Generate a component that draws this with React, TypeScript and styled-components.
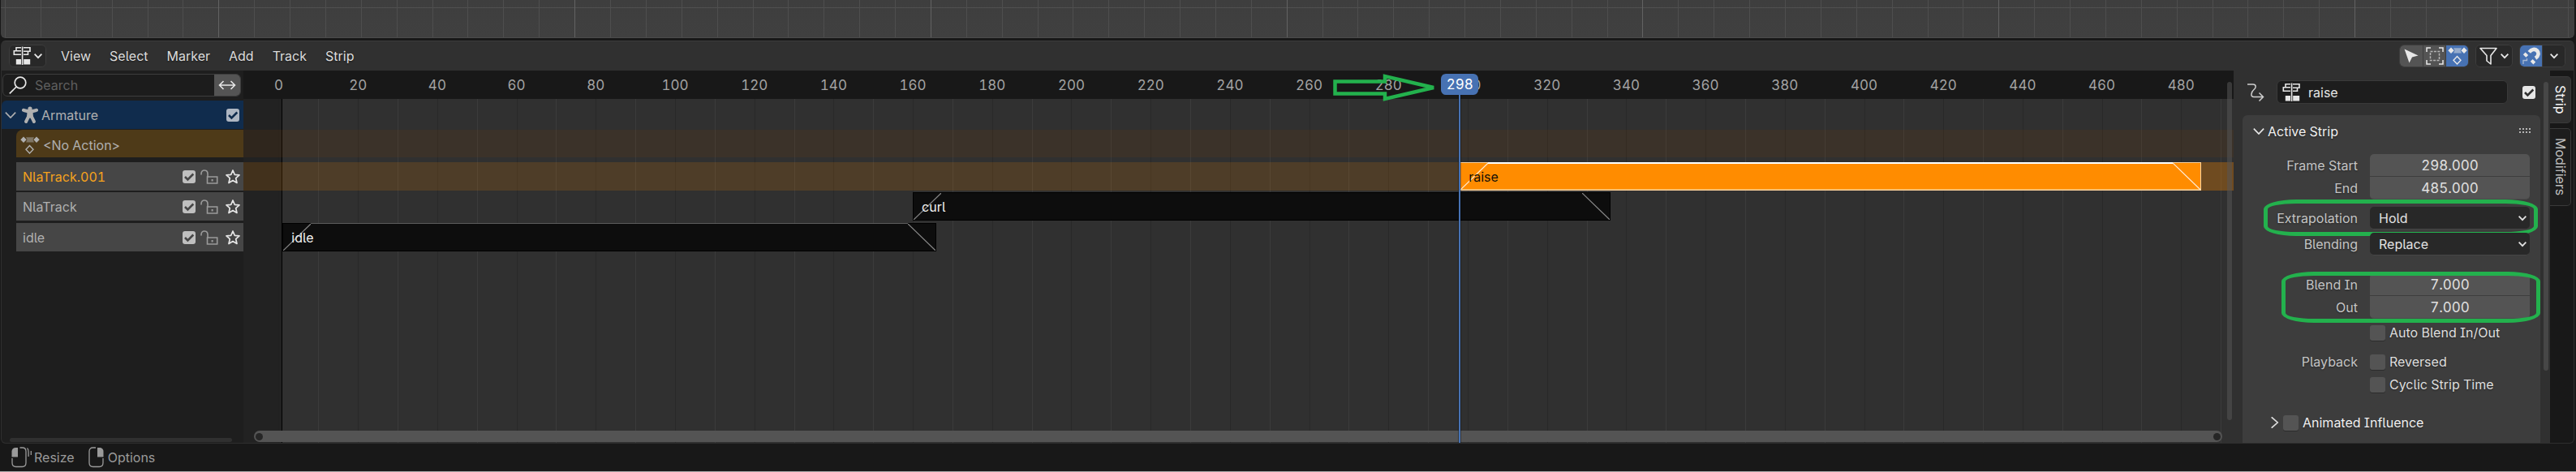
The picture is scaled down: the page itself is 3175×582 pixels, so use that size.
import React from "react";
import styled, { createGlobalStyle } from "styled-components";

const GlobalStyle = createGlobalStyle`
  * { box-sizing: border-box; }
  body {
    margin: 0;
    background: #181818;
    color: #d6d6d6;
    font-family: Inter, "Liberation Sans", sans-serif;
    font-size: 16px;
    line-height: 20px;
    font-feature-settings: "tnum", "cv05", "cv08";
  }
  button, input, select { font: inherit; color: inherit; font-feature-settings: inherit; margin: 0; }
  svg { display: block; fill: none; stroke: currentColor; flex: none; }
`;

/* Frames visible in the timeline, from its left edge to its right edge. */
const VIEW_START = -8.9;
const VIEW_END = 493.24;
const VIEW_SPAN = VIEW_END - VIEW_START;
const at = (frame: number) => `${((frame - VIEW_START) / VIEW_SPAN) * 100}%`;
const span = (frames: number) => `${(frames / VIEW_SPAN) * 100}%`;

const Page = styled.div`
  display: flex;
  flex-direction: column;
  min-height: 100vh;
`;

const Viewport = styled.div`
  position: relative;
  height: 47px;
  margin: 0 2px 3px 1px;
  border-bottom: 1px solid #4b4b4b;
  border-radius: 0 0 6px 6px;
  background: linear-gradient(#3e3e3e, #404040);
  overflow: hidden;
`;
const ViewportHorizon = styled.div`
  position: absolute;
  inset: 9px 0 auto;
  height: 1px;
  background: #505050;
`;
const ViewportLine = styled.div<{ $major: boolean }>`
  position: absolute;
  top: 0;
  bottom: 0;
  width: 1px;
  background: ${(p) => (p.$major ? "#626262" : "#4e4e4e")};
`;

const Editor = styled.main`
  flex: 1;
  display: flex;
  flex-direction: column;
  margin: 0 2px 0 1px;
  border: 1px solid #2f2f2f;
  border-top-color: #3c3c3c;
  border-radius: 6px;
  background: #303030;
  overflow: hidden;
`;

const Header = styled.header`
  display: flex;
  align-items: center;
  height: 36px;
  padding: 0 10px 0 9px;
`;
const Menus = styled.nav`
  display: flex;
  gap: 23px;
  margin: 0 auto 0 18px;
`;
const MenuButton = styled.button`
  padding: 0;
  border: 0;
  background: none;
  color: #dcdcdc;
  text-shadow: 0 1px 2px #0008;
`;
const ButtonGroup = styled.div`
  display: flex;
  height: 28px;
  border: 1px solid #3d3d3d;
  border-radius: 6px;
  background: #262626;
  overflow: hidden;
  & + & { margin-left: 8px; }
`;
const ToolButton = styled.button<{ $tone?: "on" | "raised"; $width: number }>`
  display: flex;
  align-items: center;
  justify-content: center;
  gap: 4px;
  width: ${(p) => p.$width}px;
  padding: 0;
  border: 0;
  color: #e8e8e8;
  background: ${(p) => (p.$tone === "on" ? "#4772b3" : p.$tone === "raised" ? "#545454" : "#282828")};
  & + & { border-left: 1px solid #3d3d3d; }
`;

const Body = styled.div`
  flex: 1;
  display: flex;
  min-height: 0;
`;

const Channels = styled.aside`
  display: flex;
  flex-direction: column;
  flex: none;
  width: 298px;
  background: #1e1e1e;
`;
const SearchBar = styled.div`
  display: flex;
  height: 28px;
  margin: 4px 3px 5px 1px;
  border: 1px solid #3d3d3d;
  border-radius: 6px;
  background: #1c1c1c;
  overflow: hidden;
  align-items: center;
  padding-left: 7px;
  color: #e6e6e6;
`;
const SearchInput = styled.input`
  flex: 1;
  min-width: 0;
  padding: 0 0 0 10px;
  border: 0;
  outline: 0;
  background: none;
  &::placeholder { color: #5f5f5f; opacity: 1; }
`;
const SearchToggle = styled.button`
  display: flex;
  align-items: center;
  justify-content: center;
  align-self: stretch;
  width: 32px;
  padding: 0;
  border: 0;
  background: #545454;
  color: #e6e6e6;
`;

const ChannelRow = styled.div`
  display: flex;
  align-items: center;
  height: 35px;
  color: #b0b0b0;
`;
const ObjectRow = styled(ChannelRow)`
  gap: 6px;
  margin-bottom: 1px;
  padding: 0 5px 0 4px;
  border-radius: 6px 0 0 0;
  background: #102c4d;
`;
const ActionRow = styled(ChannelRow)`
  gap: 4px;
  height: 34px;
  margin: 0 0 6px 18px;
  padding: 3px 5px 0;
  border-radius: 8px 0 0 0;
  background: #4e3a18;
`;
const TrackRow = styled(ChannelRow)<{ $active: boolean; $gap: number }>`
  margin: 0 0 ${(p) => p.$gap}px 18px;
  padding: 0 3px 0 8px;
  background: #464646;
  color: ${(p) => (p.$active ? "#f5a21d" : "#b0b0b0")};
`;
const ChannelName = styled.span`
  display: flex;
  align-items: center;
  gap: 3px;
  flex: 1;
`;
const RowIcon = styled.button<{ $bright?: boolean }>`
  padding: 0;
  border: 0;
  background: none;
  margin-left: ${(p) => (p.$bright ? 8 : 6)}px;
  color: ${(p) => (p.$bright ? "#e6e6e6" : "#9b9b9b")};
`;
const ChannelScroll = styled.div`
  height: 5px;
  margin: auto 14px 1px 10px;
  border-radius: 3px;
  background: #303030;
`;

const CheckWrap = styled.span<{ $size: number }>`
  display: inline-grid;
  width: ${(p) => p.$size}px;
  height: ${(p) => p.$size}px;
  flex: none;
  & > * { grid-area: 1 / 1; }
  & > svg { pointer-events: none; }
`;
const CheckInput = styled.input<{ $fill: string }>`
  appearance: none;
  width: 100%;
  height: 100%;
  border-radius: 3px;
  background: #545454;
  box-shadow: 0 1px 0 #0004;
  &:checked { background: ${(p) => p.$fill}; box-shadow: none; }
`;

const Timeline = styled.section`
  position: relative;
  flex: 1;
  min-width: 0;
  display: flex;
  flex-direction: column;
  overflow: hidden;
`;
const Ruler = styled.div`
  position: relative;
  height: 35px;
  background: #181818;
  color: #a3a3a3;
`;
const RulerMark = styled.span`
  position: absolute;
  top: 8px;
  font-size: 17px;
  transform: translateX(-50%);
`;
const Lanes = styled.div`
  position: relative;
  flex: 1;
  padding-top: 38px;
`;
const GridLine = styled.div<{ $even: boolean }>`
  position: absolute;
  top: 0;
  bottom: 0;
  width: 1px;
  background: ${(p) => (p.$even ? "#292929" : "#3b3b3b")};
`;
const BeforeRange = styled.div`
  position: absolute;
  inset: 0 auto 0 0;
  border-right: 1px solid #000;
  background: #212121f4;
`;
const Lane = styled.div<{ $height: number; $gap: number; $tint?: string }>`
  position: relative;
  height: ${(p) => p.$height}px;
  margin-bottom: ${(p) => p.$gap}px;
  background: ${(p) => p.$tint ?? "none"};
`;
const HoldTail = styled.div`
  position: absolute;
  inset: 0 0 0 auto;
  background: #ff8c0030;
`;
const StripBox = styled.div<{ $selected?: boolean }>`
  position: absolute;
  top: 0;
  bottom: 0;
  display: flex;
  align-items: center;
  padding-left: 10px;
  border: 1px solid ${(p) => (p.$selected ? "#ffd29c" : "#000")};
  background: ${(p) => (p.$selected ? "#ff8c00" : "#0d0d0d")};
  color: ${(p) => (p.$selected ? "#141008" : "#f2f2f2")};
  box-shadow: ${(p) => (p.$selected ? "inset 0 -1px 0 #ffb75e" : "none")};
`;
const StripName = styled.span`
  z-index: 1;
`;
const StripEdge = styled.div<{ $selected?: boolean }>`
  position: absolute;
  top: -1px;
  height: ${(p) => (p.$selected ? 2 : 1)}px;
  background: ${(p) => (p.$selected ? "#fff" : "#5c5c5c")};
`;
const Blend = styled.svg<{ $selected?: boolean; $out?: boolean }>`
  position: absolute;
  top: 0;
  ${(p) => (p.$out ? "right: 0;" : "left: 0;")}
  height: 100%;
  color: ${(p) => (p.$selected ? "#ffeeda" : "#8a8a8a")};
`;
const Playhead = styled.div`
  position: absolute;
  top: 30px;
  bottom: 0;
  width: 2px;
  margin-left: -1px;
  background: #4772b3;
  box-shadow: 0 0 0 1px #0005;
`;
const PlayheadFrame = styled.div`
  position: absolute;
  top: 4px;
  width: 46px;
  height: 26px;
  padding-top: 3px;
  border-radius: 6px;
  background: #4772b3;
  color: #fff;
  font-size: 17px;
  text-align: center;
  transform: translateX(-50%);
`;
const ArrowNote = styled.svg`
  position: absolute;
  top: 4px;
  color: #23b14d;
`;
const TimelineScrollY = styled.div`
  position: absolute;
  top: 14px;
  right: 2px;
  bottom: 28px;
  width: 6px;
  border-radius: 3px;
  background: #5555558c;
`;
const TimelineScrollX = styled.div`
  position: absolute;
  left: 13px;
  right: 14px;
  bottom: 1px;
  display: flex;
  align-items: center;
  justify-content: space-between;
  height: 14px;
  padding: 0 2px;
  border-radius: 7px;
  background: #545454;
`;
const ScrollGrip = styled.span`
  width: 9px;
  height: 9px;
  border-radius: 5px;
  background: #262626;
`;

const Sidebar = styled.aside`
  display: flex;
  flex: none;
  width: 390px;
  padding: 12px 2px 0 11px;
`;
const SidebarMain = styled.div`
  flex: 1;
  display: flex;
  flex-direction: column;
  min-width: 0;
`;
const SidebarScroll = styled.div`
  flex: none;
  width: 6px;
  height: 356px;
  margin: 2px 0 0 4px;
  border-radius: 3px;
  background: #474747;
`;
const StripNameRow = styled.div`
  display: flex;
  align-items: center;
  margin-bottom: 14px;
  padding: 0 6px 0 5px;
  color: #cfcfcf;
`;
const NameField = styled.label`
  display: flex;
  align-items: center;
  flex: 1;
  min-width: 0;
  height: 29px;
  margin: 0 18px 0 15px;
  padding-left: 6px;
  border: 1px solid #3a3a3a;
  border-radius: 6px;
  background: #1d1d1d;
  color: #e6e6e6;
`;
const NameInput = styled.input`
  flex: 1;
  min-width: 0;
  padding: 0 0 0 10px;
  border: 0;
  outline: 0;
  background: none;
`;
const Panel = styled.section`
  flex: 1;
  border-radius: 6px 6px 0 0;
  background: #3d3d3d;
`;
const PanelHeader = styled.header`
  display: flex;
  align-items: center;
  height: 39px;
  padding: 0 11px 0 13px;
  color: #e8e8e8;
`;
const PanelTitle = styled.h2`
  flex: 1;
  margin: 0 0 0 4px;
  font-size: 16px;
  font-weight: 400;
  line-height: 20px;
  color: #f0f0f0;
  text-shadow: 0 1px 2px #0008;
`;
const PanelBody = styled.div`
  padding: 9px 13px 0 0;
`;
const FieldGroup = styled.div<{ $gap: number }>`
  position: relative;
  margin-bottom: ${(p) => p.$gap}px;
`;
const FieldRow = styled.div`
  display: grid;
  grid-template-columns: minmax(0, 142fr) minmax(0, 197fr);
  column-gap: 15px;
  align-items: center;
  height: 28px;
`;
const FieldLabel = styled.label`
  text-align: right;
  color: #c4c4c4;
  text-shadow: 0 1px 2px #0006;
`;
const NumberField = styled.input<{ $edge: "top" | "bottom" }>`
  width: 100%;
  height: 28px;
  padding: 0;
  border: 0;
  border-bottom: 1px solid ${(p) => (p.$edge === "top" ? "#3d3d3d" : "#4a4a4a")};
  border-radius: ${(p) => (p.$edge === "top" ? "5px 5px 0 0" : "0 0 5px 5px")};
  background: #545454;
  color: #e0e0e0;
  font-size: 17px;
  text-align: center;
`;
const SelectWrap = styled.div`
  display: grid;
  align-items: center;
  color: #e2e2e2;
  & > * { grid-area: 1 / 1; }
  & > svg { justify-self: end; margin-right: 4px; pointer-events: none; }
`;
const SelectField = styled.select`
  appearance: none;
  width: 100%;
  height: 28px;
  padding: 0 20px 0 11px;
  border: 0;
  border-bottom: 1px solid #464646;
  border-radius: 5px;
  background: #282828;
`;
const CheckLabel = styled.label<{ $title?: boolean }>`
  display: flex;
  align-items: center;
  gap: 5px;
  white-space: nowrap;
  color: ${(p) => (p.$title ? "#f0f0f0" : "#dedede")};
  text-shadow: 0 1px 2px #0006;
`;
const SubPanel = styled.div`
  display: flex;
  align-items: center;
  gap: 2px;
  height: 28px;
  padding-left: 34px;
  color: #e0e0e0;
`;
const MarkerRing = styled.div<{ $wide?: boolean }>`
  position: absolute;
  inset: ${(p) => (p.$wide ? "-9px -10px auto 26px" : "-2px -13px -5px 48px")};
  ${(p) => (p.$wide ? "height: 45px;" : "")}
  border: 5px solid #23b14d;
  border-radius: 40px / 12px;
  pointer-events: none;
`;

const Tabs = styled.div`
  flex: none;
  width: 29px;
  padding: 7px 3px 0 0;
  background: #181818;
`;
const Tab = styled.button<{ $active?: boolean }>`
  display: flex;
  align-items: center;
  justify-content: center;
  width: 26px;
  height: ${(p) => (p.$active ? 58 : 96)}px;
  margin-bottom: 6px;
  padding: 0;
  border: 1px solid #3a3a3a;
  border-left: 0;
  border-radius: 0 5px 5px 0;
  background: ${(p) => (p.$active ? "#303030" : "#1d1d1d")};
  color: ${(p) => (p.$active ? "#f4f4f4" : "#bdbdbd")};
  writing-mode: vertical-rl;
`;

const StatusBar = styled.footer`
  display: flex;
  align-items: center;
  height: 35px;
  padding: 0 14px 1px;
  border-bottom: 1px solid #a6a6a6;
  color: #9a9a9a;
`;
const Hint = styled.span<{ $gap: number }>`
  display: flex;
  align-items: center;
  gap: ${(p) => p.$gap}px;
  margin-right: 17px;
`;

const Chevron = ({ size = 10, dir = "down" }: { size?: number; dir?: "down" | "right" }) => (
  <svg width={size} height={size} viewBox="0 0 10 10" strokeWidth={size > 12 ? 1.6 : 1.8}>
    <path d={dir === "down" ? "M.6 2.6 5 7.2 9.4 2.6" : "M1.2 .2 6.600 5 1.200 9.800"} vectorEffect="non-scaling-stroke" />
  </svg>
);

const NlaIcon = () => (
  <svg width="22" height="24" viewBox="0 0 22 24" strokeWidth="1.6">
    <path d="M10 1.800H4v4.500M10 5.800H1.300v4.400H10M13 1.800h8v4.400h-8M13 10.200h5.500V6.200" />
    <path d="M11.600 .5v22.500" />
    <path d="M3.800 16h6.200v6.500H3.800zM13.200 16h8v6.500h-8z" fill="currentColor" stroke="none" />
  </svg>
);

const ActionIcon = () => (
  <svg width="24" height="22" viewBox="0 0 24 22" strokeWidth="1.4">
    <path d="M7 1.200h10l-1.500 3 1.500 3.300H7l1.500-3.300z" fill="currentColor" stroke="none" opacity=".5" />
    <path d="M4 .500 7.700 4.300 4 8 .3 4.300zM20 .500l3.700 3.800L20 8l-3.700-3.700z" fill="currentColor" stroke="none" />
    <path d="M11.500 11.500 16 16.300l-4.500 4.700L7 16.300z" />
  </svg>
);

const ArmatureIcon = () => (
  <svg width="22" height="22" viewBox="0 0 22 22" strokeLinecap="round" strokeLinejoin="round">
    <circle cx="11" cy="3" r="2.600" fill="currentColor" stroke="none" />
    <path d="M3 4.800c3 .8 5 1.500 8 1.500s5-.7 8-1.500" strokeWidth="4.200" />
    <path d="M9 7h4l.5 6h-5z" fill="currentColor" strokeWidth="3" />
    <path d="M9 13 6 19M13 13l3 6" strokeWidth="4" />
  </svg>
);

const SearchIcon = () => (
  <svg width="22" height="22" viewBox="0 0 22 22" strokeWidth="1.700">
    <circle cx="14" cy="8" r="6.800" />
    <path d="M9.200 13 .800 21.300" />
  </svg>
);

const LockIcon = () => (
  <svg width="22" height="18" viewBox="0 0 22 18" strokeWidth="1.600">
    <path d="M1 6.500V5.500C1 2.500 2.800 1 5 1s4 1.500 4 4.500V9" />
    <path d="M8.500 9h12.200v8H8.500z" />
    <path d="M14.600 12v2.500" strokeWidth="2" />
  </svg>
);

const StarIcon = () => (
  <svg width="20" height="20" viewBox="0 0 20 20" strokeWidth="1.700" strokeLinejoin="round">
    <path d="m10 2 2.300 5.300 5.700.5-4.300 3.900 1.300 5.800L10 14.500l-5 3 1.300-5.800L2 7.800l5.700-.5z" />
  </svg>
);

const SnapIcon = () => (
  <svg width="22" height="22" viewBox="0 0 22 22" stroke="#fff">
    <path d="M8.300 6.300C11.500 2.200 15.500 2 18 4.500s2 6.700-2 9.300" strokeWidth="4.600" />
    <path d="m2.200 7.800 3.600 3.600M11.200 16.400l3.600 3.600" strokeWidth="4" />
    <path d="M1 21v-4.500h4.500V14" strokeWidth="1.300" opacity=".6" />
  </svg>
);

const MouseIcon = ({ side }: { side: "left" | "right" }) => (
  <svg width={side === "left" ? 26 : 19} height="26" viewBox={side === "left" ? "0 0 26 26" : "0 0 19 26"} strokeWidth="1.300">
    <path d="M1 14v5.500c0 3 1.800 5 4.500 5h8c2.700 0 4.500-2 4.500-5V14" />
    {side === "left" ? (
      <>
        <path d="M8 1H5.500C2.500 1 .500 3 .500 5.500V12.500H8z" fill="currentColor" stroke="none" />
        <path d="M10.500 1h3C16.200 1 18 2.800 18 5.500V14M19.500 1.500c1.300 1 1.600 3 1.600 5V12M24.300 5v5" />
      </>
    ) : (
      <>
        <path d="M11 1h2.500c3 0 5 2 5 4.500v7H11z" fill="currentColor" stroke="none" />
        <path d="M9 1H5.500C2.800 1 1 2.800 1 5.500V14" />
      </>
    )}
  </svg>
);

const Check = ({ size, label, checked, fill = "#bfbfbf", tick = "#464646" }: {
  size: number; label?: string; checked?: boolean; fill?: string; tick?: string;
}) => (
  <CheckWrap $size={size}>
    <CheckInput type="checkbox" defaultChecked={checked} aria-label={label} $fill={fill} />
    {checked && (
      <svg width={size} height={size} viewBox="0 0 16 16" strokeWidth="2.600" stroke={tick}>
        <path d="m3 8 3.400 3.400L13.300 4.500" stroke={tick} />
      </svg>
    )}
  </CheckWrap>
);

const BlendLine = ({ frames, total, out, selected }: { frames: number; total: number; out?: boolean; selected?: boolean }) => (
  <Blend
    $out={out}
    $selected={selected}
    viewBox="0 0 34 34"
    preserveAspectRatio="none"
    strokeWidth="1.200"
    style={{ width: `${(frames / total) * 100}%` }}
  >
    <path d={out ? "M0 0 34 34" : "M0 34 34 0"} vectorEffect="non-scaling-stroke" />
  </Blend>
);

const Strip = ({ name, start, end, edge, selected }: {
  name: string; start: number; end: number; edge?: boolean; selected?: boolean;
}) => {
  const total = end - start;
  const inset = `${(7 / total) * 100}%`;
  return (
    <StripBox $selected={selected} style={{ left: at(start), width: span(total) }}>
      {edge && <StripEdge $selected={selected} style={{ left: inset, right: inset }} />}
      <StripName>{name}</StripName>
      <BlendLine frames={7} total={total} selected={selected} />
      <BlendLine frames={7} total={total} selected={selected} out />
    </StripBox>
  );
};

const rulerFrames = Array.from({ length: 25 }, (_, i) => i * 20);
const gridFrames = Array.from({ length: 50 }, (_, i) => i * 10);
const tracks = [
  { name: "NlaTrack.001", gap: 2 },
  { name: "NlaTrack", gap: 3 },
  { name: "idle", gap: 0 },
];

export default function App() {
  return (
    <Page>
      <GlobalStyle />
      <Viewport>
        <ViewportHorizon />
        {Array.from({ length: 73 }, (_, i) => (
          <ViewportLine key={i} $major={i % 10 === 6} style={{ left: `${0.16 + i * 1.3833}%` }} />
        ))}
      </Viewport>

      <Editor>
        <Header>
          <ButtonGroup>
            <ToolButton $width={44} aria-label="Editor type">
              <NlaIcon />
              <Chevron />
            </ToolButton>
          </ButtonGroup>
          <Menus>
            {["View", "Select", "Marker", "Add", "Track", "Strip"].map((m) => (
              <MenuButton key={m}>{m}</MenuButton>
            ))}
          </Menus>
          <ButtonGroup>
            <ToolButton $width={28} $tone="raised" aria-label="Only selected">
              <svg width="18" height="20" viewBox="0 0 18 20">
                <path d="M.5 1.500 17.500 9.500 10 11.500 6.500 18.500z" fill="currentColor" stroke="none" />
              </svg>
            </ToolButton>
            <ToolButton $width={28} $tone="raised" aria-label="Show hidden">
              <svg width="22" height="22" viewBox="0 0 22 22" strokeWidth="1.500">
                <path d="M1 6V1h5M16 1h5v5M21 16v5h-5M6 21H1v-5" />
                <path d="M5.500 5.500h11v11h-11z" strokeDasharray="3 1.400" opacity=".65" />
              </svg>
            </ToolButton>
            <ToolButton $width={28} $tone="on" aria-label="Include missing NLA">
              <ActionIcon />
            </ToolButton>
          </ButtonGroup>
          <ButtonGroup>
            <ToolButton $width={44} aria-label="Filters">
              <svg width="22" height="22" viewBox="0 0 22 22" strokeWidth="1.600" strokeLinejoin="round">
                <path d="M1 1.500h20l-7 9V21l-5-4v-6.500z" />
              </svg>
              <Chevron />
            </ToolButton>
          </ButtonGroup>
          <ButtonGroup>
            <ToolButton $width={27} $tone="on" aria-label="Snap">
              <SnapIcon />
            </ToolButton>
            <ToolButton $width={28} aria-label="Snap options">
              <Chevron />
            </ToolButton>
          </ButtonGroup>
        </Header>

        <Body>
          <Channels>
            <SearchBar>
              <SearchIcon />
              <SearchInput type="text" placeholder="Search" aria-label="Search channels" />
              <SearchToggle aria-label="Invert search">
                <svg width="22" height="12" viewBox="0 0 22 12" strokeWidth="1.600">
                  <path d="M1.500 6h19M6.500 1l-5 5 5 5M15.500 1l5 5-5 5" />
                </svg>
              </SearchToggle>
            </SearchBar>
            <ObjectRow>
              <Chevron size={14} />
              <ChannelName>
                <ArmatureIcon />
                Armature
              </ChannelName>
              <Check size={16} label="Armature enabled" checked fill="#aeb6c2" tick="#102c4d" />
            </ObjectRow>
            <ActionRow>
              <ActionIcon />
              <ChannelName>&lt;No Action&gt;</ChannelName>
            </ActionRow>
            {tracks.map((t, i) => (
              <TrackRow key={t.name} $active={i === 0} $gap={t.gap}>
                <ChannelName>{t.name}</ChannelName>
                <Check size={16} label={`${t.name} enabled`} checked />
                <RowIcon aria-label={`Lock ${t.name}`}><LockIcon /></RowIcon>
                <RowIcon $bright aria-label={`Solo ${t.name}`}><StarIcon /></RowIcon>
              </TrackRow>
            ))}
            <ChannelScroll />
          </Channels>

          <Timeline>
            <Ruler>
              {rulerFrames.map((f) => (
                <RulerMark key={f} style={{ left: at(f) }}>{f}</RulerMark>
              ))}
            </Ruler>
            <Lanes>
              {gridFrames.map((f) => (
                <GridLine key={f} $even={f % 20 === 0} style={{ left: at(f) }} />
              ))}
              <BeforeRange style={{ width: at(1) }} />
              <Lane $height={34} $gap={6} $tint="#8c460021" />
              <Lane $height={35} $gap={2} $tint="#ff8c0026">
                <HoldTail style={{ left: at(485) }} />
                <Strip name="raise" start={298} end={485} edge selected />
              </Lane>
              <Lane $height={35} $gap={3}>
                <Strip name="curl" start={160} end={336} />
              </Lane>
              <Lane $height={35} $gap={0}>
                <Strip name="idle" start={1} end={166} edge />
              </Lane>
            </Lanes>
            <TimelineScrollX>
              <ScrollGrip />
              <ScrollGrip />
            </TimelineScrollX>
            <TimelineScrollY />
            <Playhead style={{ left: at(298) }} />
            <PlayheadFrame style={{ left: at(298) }}>298</PlayheadFrame>
            <ArrowNote width="129" height="34" viewBox="0 0 129 34" strokeWidth="4.500" style={{ left: at(266) }}>
              <path d="M2.500 9.500H64V3l60 14-60 14V24.500H2.500z" />
            </ArrowNote>
          </Timeline>

          <Sidebar>
            <SidebarMain>
              <StripNameRow>
                <svg width="22" height="22" viewBox="0 0 22 22" strokeWidth="1.500">
                  <path d="M1 1h7c4 0 4 4 1 6.500S4 16.500 9 16.500h11M15.500 11.500l5 5-5 5" />
                </svg>
                <NameField>
                  <NlaIcon />
                  <NameInput type="text" defaultValue="raise" aria-label="Strip name" />
                </NameField>
                <Check size={16} label="Strip enabled" checked fill="#e6e6e6" tick="#303030" />
              </StripNameRow>
              <Panel>
                <PanelHeader>
                  <Chevron size={14} />
                  <PanelTitle>Active Strip</PanelTitle>
                  <svg width="15" height="7" viewBox="0 0 15 7" strokeWidth="2" strokeDasharray="2 2" opacity=".7">
                    <path d="M0 1h15M0 5h15" />
                  </svg>
                </PanelHeader>
                <PanelBody>
                  <FieldGroup $gap={9}>
                    <FieldRow>
                      <FieldLabel htmlFor="start">Frame Start</FieldLabel>
                      <NumberField id="start" $edge="top" defaultValue="298.000" />
                    </FieldRow>
                    <FieldRow>
                      <FieldLabel htmlFor="end">End</FieldLabel>
                      <NumberField id="end" $edge="bottom" defaultValue="485.000" />
                    </FieldRow>
                  </FieldGroup>
                  <FieldGroup $gap={4}>
                    <FieldRow>
                      <FieldLabel htmlFor="extrapolation">Extrapolation</FieldLabel>
                      <SelectWrap>
                        <SelectField id="extrapolation"><option>Hold</option></SelectField>
                        <Chevron />
                      </SelectWrap>
                    </FieldRow>
                    <MarkerRing $wide />
                  </FieldGroup>
                  <FieldGroup $gap={22}>
                    <FieldRow>
                      <FieldLabel htmlFor="blending">Blending</FieldLabel>
                      <SelectWrap>
                        <SelectField id="blending"><option>Replace</option></SelectField>
                        <Chevron />
                      </SelectWrap>
                    </FieldRow>
                  </FieldGroup>
                  <FieldGroup $gap={3}>
                    <FieldRow>
                      <FieldLabel htmlFor="blendin">Blend In</FieldLabel>
                      <NumberField id="blendin" $edge="top" defaultValue="7.000" />
                    </FieldRow>
                    <FieldRow>
                      <FieldLabel htmlFor="blendout">Out</FieldLabel>
                      <NumberField id="blendout" $edge="bottom" defaultValue="7.000" />
                    </FieldRow>
                    <MarkerRing />
                  </FieldGroup>
                  <FieldGroup $gap={8}>
                    <FieldRow>
                      <span />
                      <CheckLabel><Check size={19} />Auto Blend In/Out</CheckLabel>
                    </FieldRow>
                  </FieldGroup>
                  <FieldGroup $gap={19}>
                    <FieldRow>
                      <FieldLabel as="span">Playback</FieldLabel>
                      <CheckLabel><Check size={19} />Reversed</CheckLabel>
                    </FieldRow>
                    <FieldRow>
                      <span />
                      <CheckLabel><Check size={19} />Cyclic Strip Time</CheckLabel>
                    </FieldRow>
                  </FieldGroup>
                  <SubPanel>
                    <Chevron size={14} dir="right" />
                    <CheckLabel $title><Check size={19} />Animated Influence</CheckLabel>
                  </SubPanel>
                </PanelBody>
              </Panel>
            </SidebarMain>
            <SidebarScroll />
          </Sidebar>

          <Tabs>
            <Tab $active>Strip</Tab>
            <Tab>Modifiers</Tab>
          </Tabs>
        </Body>
      </Editor>

      <StatusBar>
        <Hint $gap={2}><MouseIcon side="left" />Resize</Hint>
        <Hint $gap={5}><MouseIcon side="right" />Options</Hint>
      </StatusBar>
    </Page>
  );
}
